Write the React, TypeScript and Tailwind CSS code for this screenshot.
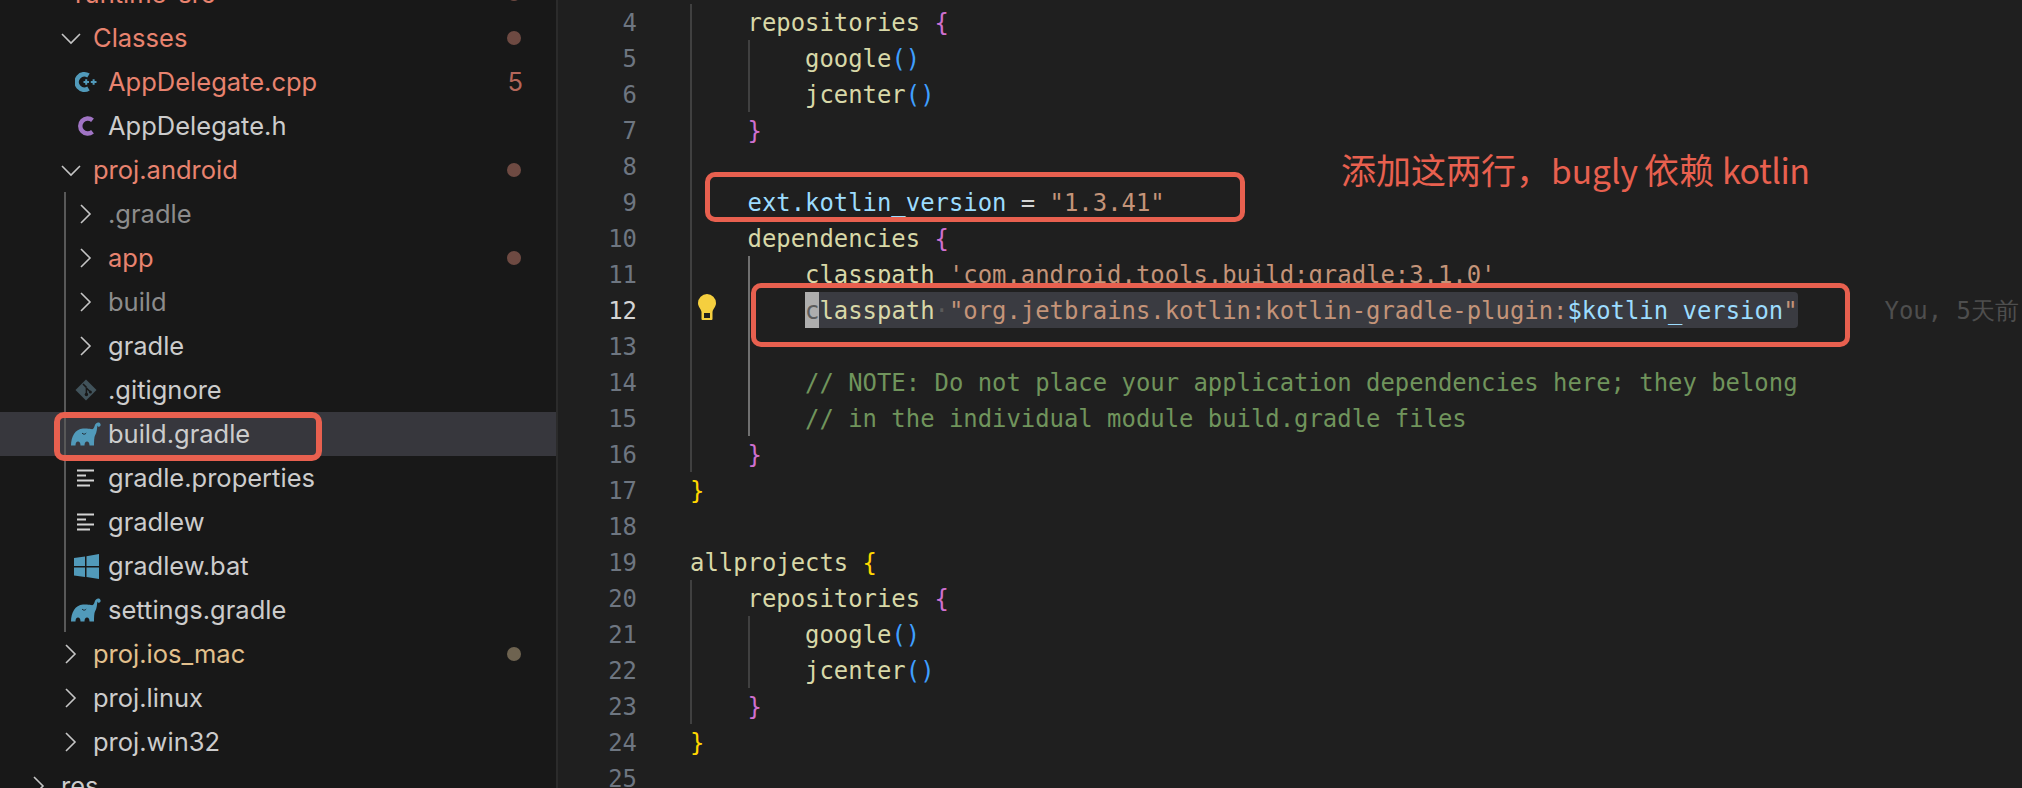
import React from "react";

const Chevron = ({ open }: { open?: boolean }) => (
  <svg width="24" height="24" viewBox="0 0 24 24" fill="none" stroke="#c5c5c5" strokeWidth="1.6">
    <path d={open ? "M3 8l9 9 9-9" : "M7 3l9 9-9 9"} />
  </svg>
);

const CppIcon = () => (
  <svg width="22" height="22" viewBox="0 0 22 22" fill="none">
    <path d="M13.500 4.500A7.700 7.700 0 1 0 13.500 17.500" stroke="#519aba" strokeWidth="4.600" />
    <path d="M8.500 11h5.500M11.200 8.300v5.400M15.800 11h5.700M18.600 8.300v5.400" stroke="#519aba" strokeWidth="2" />
  </svg>
);

const CIcon = () => (
  <svg width="18" height="22" viewBox="0 0 18 22" fill="none">
    <path d="M15.500 5.200A7.500 7.500 0 1 0 15.500 16.800" stroke="#a074c4" strokeWidth="4.400" />
  </svg>
);

const GitIcon = () => (
  <svg width="22" height="22" viewBox="0 0 22 22">
    <path d="M11 0.500L21.500 11 11 21.500 0.500 11z" fill="#41535b" />
    <path d="M8 5l3.400 3.400M11.400 8.400v7M11.400 9l4 4" stroke="#181818" strokeWidth="1.500" fill="none" />
    <circle cx="11.400" cy="15.500" r="1.700" fill="#181818" />
    <circle cx="15.400" cy="13" r="1.500" fill="#181818" />
  </svg>
);

const GradleIcon = () => (
  <svg width="30" height="24" viewBox="0 0 30 24">
    <path
      d="M0 23.500C0 15 4 7 12 6.500C15 6.300 18 6.500 20 7C22 7.500 23 6.500 23.600 4C24.300 1 27 -0.300 28.800 1C30.400 2.400 29.600 5 27.800 4.800C26.800 4.600 26.600 3.800 26.400 3.400C26 6 26 10 24 13.500C23.200 15 23 19 23 23.500L18.500 23.500C18.500 21 17.500 19.500 16 19.500C14.500 19.500 13.500 21 13.500 23.500L9.500 23.500C9.500 21 8.500 19.500 7 19.500C5.500 19.500 4.500 21 4.500 23.500z"
      fill="#519aba"
    />
    <path d="M11 11c1.200 1.600 3 1.600 4.200 0" stroke="#20303a" strokeWidth="1" fill="none" />
  </svg>
);

const LinesIcon = () => (
  <svg width="18" height="18" viewBox="0 0 18 18" stroke="#d4d4d4" strokeWidth="2">
    <path d="M0 1.500h17M0 6.500h9M0 11.500h17M0 16.500h13" />
  </svg>
);

const WindowsIcon = () => (
  <svg width="25" height="25" viewBox="0 0 25 25" fill="#519aba">
    <path d="M0 4l11-1.600V12H0zM12.500 2.200L25 0v12H12.500zM0 13.500h11V23L0 21.400zM12.500 13.500H25V25l-12.500-2z" />
  </svg>
);

const Dot = ({ color }: { color: string }) => (
  <span className={`h-[14px] w-[14px] rounded-full ${color}`} />
);

type RowProps = {
  pad: string;
  box: string;
  icon: React.ReactNode;
  label: string;
  text: string;
  end?: React.ReactNode;
  selected?: boolean;
};

const Row = ({ pad, box, icon, label, text, end, selected }: RowProps) => (
  <div className={`flex h-11 items-center pr-[35px] ${pad} ${selected ? "bg-[#37373d]" : ""}`}>
    <span className={`flex shrink-0 items-center justify-center ${box}`}>{icon}</span>
    <span className={`flex-1 whitespace-pre ${text}`}>{label}</span>
    {end}
  </div>
);

const RED = "text-[#e8836f]";
const WHITE = "text-[#cccccc]";
const GRAY = "text-[#8c8c8c]";

const redDot = <Dot color="bg-[#6e4a42]" />;

const Sidebar = () => (
  <aside className="w-[556px] shrink-0 -mt-[28px] bg-[#181818] text-[25.5px] font-['Inter',sans-serif] leading-[46px]">
    <Row pad="pl-[32px]" box="w-[43px]" icon={null} label="runtime-src" text={RED} end={redDot} />
    <Row pad="pl-[48px]" box="w-[45px]" icon={<Chevron open />} label="Classes" text={RED} end={redDot} />
    <Row
      pad="pl-[64px]"
      box="w-[44px]"
      icon={<CppIcon />}
      label="AppDelegate.cpp"
      text={RED}
      end={<span className="-mr-[2px] text-[#b5665a]">5</span>}
    />
    <Row pad="pl-[64px]" box="w-[44px]" icon={<CIcon />} label="AppDelegate.h" text={WHITE} />
    <Row pad="pl-[48px]" box="w-[45px]" icon={<Chevron open />} label="proj.android" text={RED} end={redDot} />
    <div className="relative">
      <Row pad="pl-[64px]" box="w-[44px]" icon={<Chevron />} label=".gradle" text={GRAY} />
      <Row pad="pl-[64px]" box="w-[44px]" icon={<Chevron />} label="app" text={RED} end={redDot} />
      <Row pad="pl-[64px]" box="w-[44px]" icon={<Chevron />} label="build" text={GRAY} />
      <Row pad="pl-[64px]" box="w-[44px]" icon={<Chevron />} label="gradle" text={WHITE} />
      <Row pad="pl-[64px]" box="w-[44px]" icon={<GitIcon />} label=".gitignore" text={WHITE} />
      <Row pad="pl-[64px]" box="w-[44px]" icon={<GradleIcon />} label="build.gradle" text={WHITE} selected />
      <Row pad="pl-[64px]" box="w-[44px]" icon={<LinesIcon />} label="gradle.properties" text={WHITE} />
      <Row pad="pl-[64px]" box="w-[44px]" icon={<LinesIcon />} label="gradlew" text={WHITE} />
      <Row pad="pl-[64px]" box="w-[44px]" icon={<WindowsIcon />} label="gradlew.bat" text={WHITE} />
      <Row pad="pl-[64px]" box="w-[44px]" icon={<GradleIcon />} label="settings.gradle" text={WHITE} />
      <span className="absolute inset-y-0 left-[64px] w-[2px] bg-[#585858]" />
    </div>
    <Row
      pad="pl-[48px]"
      box="w-[45px]"
      icon={<Chevron />}
      label="proj.ios_mac"
      text="text-[#e2c08d]"
      end={<Dot color="bg-[#6e6350]" />}
    />
    <Row pad="pl-[48px]" box="w-[45px]" icon={<Chevron />} label="proj.linux" text={WHITE} />
    <Row pad="pl-[48px]" box="w-[45px]" icon={<Chevron />} label="proj.win32" text={WHITE} />
    <Row pad="pl-[16px]" box="w-[45px]" icon={<Chevron />} label="res" text={WHITE} />
  </aside>
);

const FN = "text-[#d8d8a8]";
const PINK = "text-[#cf70cf]";
const GOLD = "text-[#ffd700]";
const BLUE = "text-[#3f9fff]";
const STR = "text-[#c49479]";
const VAR = "text-[#9cdcfe]";
const COMMENT = "text-[#70945c]";

const Guide = ({ at, color }: { at: string; color: string }) => (
  <span className={`absolute inset-y-0 w-[2px] ${at} ${color}`} />
);

const OUTER = <Guide at="left-0" color="bg-[#404040]" />;
const INNER = <Guide at="left-[58px]" color="bg-[#404040]" />;
const ACTIVE = <Guide at="left-[58px]" color="bg-[#707070]" />;

const Line = ({
  n,
  guides,
  active,
  children,
}: {
  n: number;
  guides?: React.ReactNode;
  active?: boolean;
  children?: React.ReactNode;
}) => (
  <div className="flex h-9 shrink-0">
    <span className={`w-[79px] text-right ${active ? "text-[#d4d4d4]" : "text-[#6e7681]"}`}>{n}</span>
    <span className="relative ml-[53px] flex-1 whitespace-pre">
      {guides}
      {children}
    </span>
  </div>
);

const Repos = ({ start }: { start: number }) => (
  <>
    <Line n={start} guides={OUTER}>
      <span className={FN}>    repositories </span>
      <span className={PINK}>{"{"}</span>
    </Line>
    <Line n={start + 1} guides={<>{OUTER}{INNER}</>}>
      <span className={FN}>        google</span>
      <span className={BLUE}>()</span>
    </Line>
    <Line n={start + 2} guides={<>{OUTER}{INNER}</>}>
      <span className={FN}>        jcenter</span>
      <span className={BLUE}>()</span>
    </Line>
    <Line n={start + 3} guides={OUTER}>
      <span className={PINK}>{"    }"}</span>
    </Line>
  </>
);

const Editor = () => (
  <main className="flex min-w-0 flex-1 flex-col overflow-hidden border-l-2 border-[#2b2b2b] bg-[#1f1f1f] pt-1 font-['DejaVu_Sans_Mono',monospace] text-[23.9px] leading-[38px]">
    <Repos start={4} />
    <Line n={8} guides={OUTER} />
    <Line n={9} guides={OUTER}>
      <span className={VAR}>    ext.kotlin_version</span>
      <span className="text-[#d4d4d4]"> = </span>
      <span className={STR}>"1.3.41"</span>
    </Line>
    <Line n={10} guides={OUTER}>
      <span className={FN}>    dependencies </span>
      <span className={PINK}>{"{"}</span>
    </Line>
    <Line n={11} guides={<>{OUTER}{ACTIVE}</>}>
      <span className={FN}>        classpath </span>
      <span className={STR}>'com.android.tools.build:gradle:3.1.0'</span>
    </Line>
    <Line n={12} guides={<>{OUTER}{ACTIVE}</>} active>
      {"        "}
      <span className="inline-block h-9 rounded-r-[4px] bg-[#3a3b41]">
        <span className="inline-block h-9 bg-[#aeaeae] text-[#5c5c5c]">c</span>
        <span className={FN}>lasspath</span>
        <span className="text-[#5a5a5a]">·</span>
        <span className={STR}>"org.jetbrains.kotlin:kotlin-gradle-plugin:</span>
        <span className={VAR}>$kotlin_version</span>
        <span className={STR}>"</span>
      </span>
      <span className="ml-[87px] text-[#4e4e4e]">You, 5天前</span>
    </Line>
    <Line n={13} guides={<>{OUTER}{ACTIVE}</>} />
    <Line n={14} guides={<>{OUTER}{ACTIVE}</>}>
      <span className={COMMENT}>        // NOTE: Do not place your application dependencies here; they belong</span>
    </Line>
    <Line n={15} guides={<>{OUTER}{ACTIVE}</>}>
      <span className={COMMENT}>        // in the individual module build.gradle files</span>
    </Line>
    <Line n={16} guides={OUTER}>
      <span className={PINK}>{"    }"}</span>
    </Line>
    <Line n={17}>
      <span className={GOLD}>{"}"}</span>
    </Line>
    <Line n={18} />
    <Line n={19}>
      <span className={FN}>allprojects </span>
      <span className={GOLD}>{"{"}</span>
    </Line>
    <Repos start={20} />
    <Line n={24}>
      <span className={GOLD}>{"}"}</span>
    </Line>
    <Line n={25} />
  </main>
);

const Bulb = () => (
  <svg className="absolute left-[698px] top-[294px]" width="18" height="26" viewBox="0 0 18 26">
    <path d="M9 0a9 9 0 0 1 9 9c0 4-3 5.500-3.500 9v7a1 1 0 0 1-1 1h-9a1 1 0 0 1-1-1v-7C3 14.500 0 13 0 9a9 9 0 0 1 9-9z" fill="#f5cf3f" />
    <rect x="6" y="19" width="6" height="5" fill="#1f1f1f" />
  </svg>
);

const App = () => (
  <div className="relative flex h-[788px] w-[2022px] overflow-hidden bg-[#1f1f1f]">
    <Sidebar />
    <Editor />
    <Bulb />
    {/* red annotation boxes drawn over the screenshot */}
    <div className="absolute left-[54px] top-[412px] h-[49px] w-[268px] rounded-[10px] border-[6px] border-[#e8604f]" />
    <div className="absolute left-[705px] top-[172px] h-[50px] w-[540px] rounded-[10px] border-[5px] border-[#e8604f]" />
    <div className="absolute left-[751px] top-[283px] h-[64px] w-[1099px] rounded-[10px] border-[5px] border-[#e8604f]" />
    <div className="absolute left-[1341px] top-[146px] flex items-baseline whitespace-pre font-['Noto_Sans_CJK_SC',sans-serif] text-[35px] leading-[46px] text-[#e8604f]">
      <span>添加这两行，</span>
      <span className="text-[33.5px]">bugly</span>
      <span className="ml-[6px]">依赖</span>
      <span className="ml-[8px] text-[34px] tracking-[-0.5px]">kotlin</span>
    </div>
  </div>
);

export default App;
